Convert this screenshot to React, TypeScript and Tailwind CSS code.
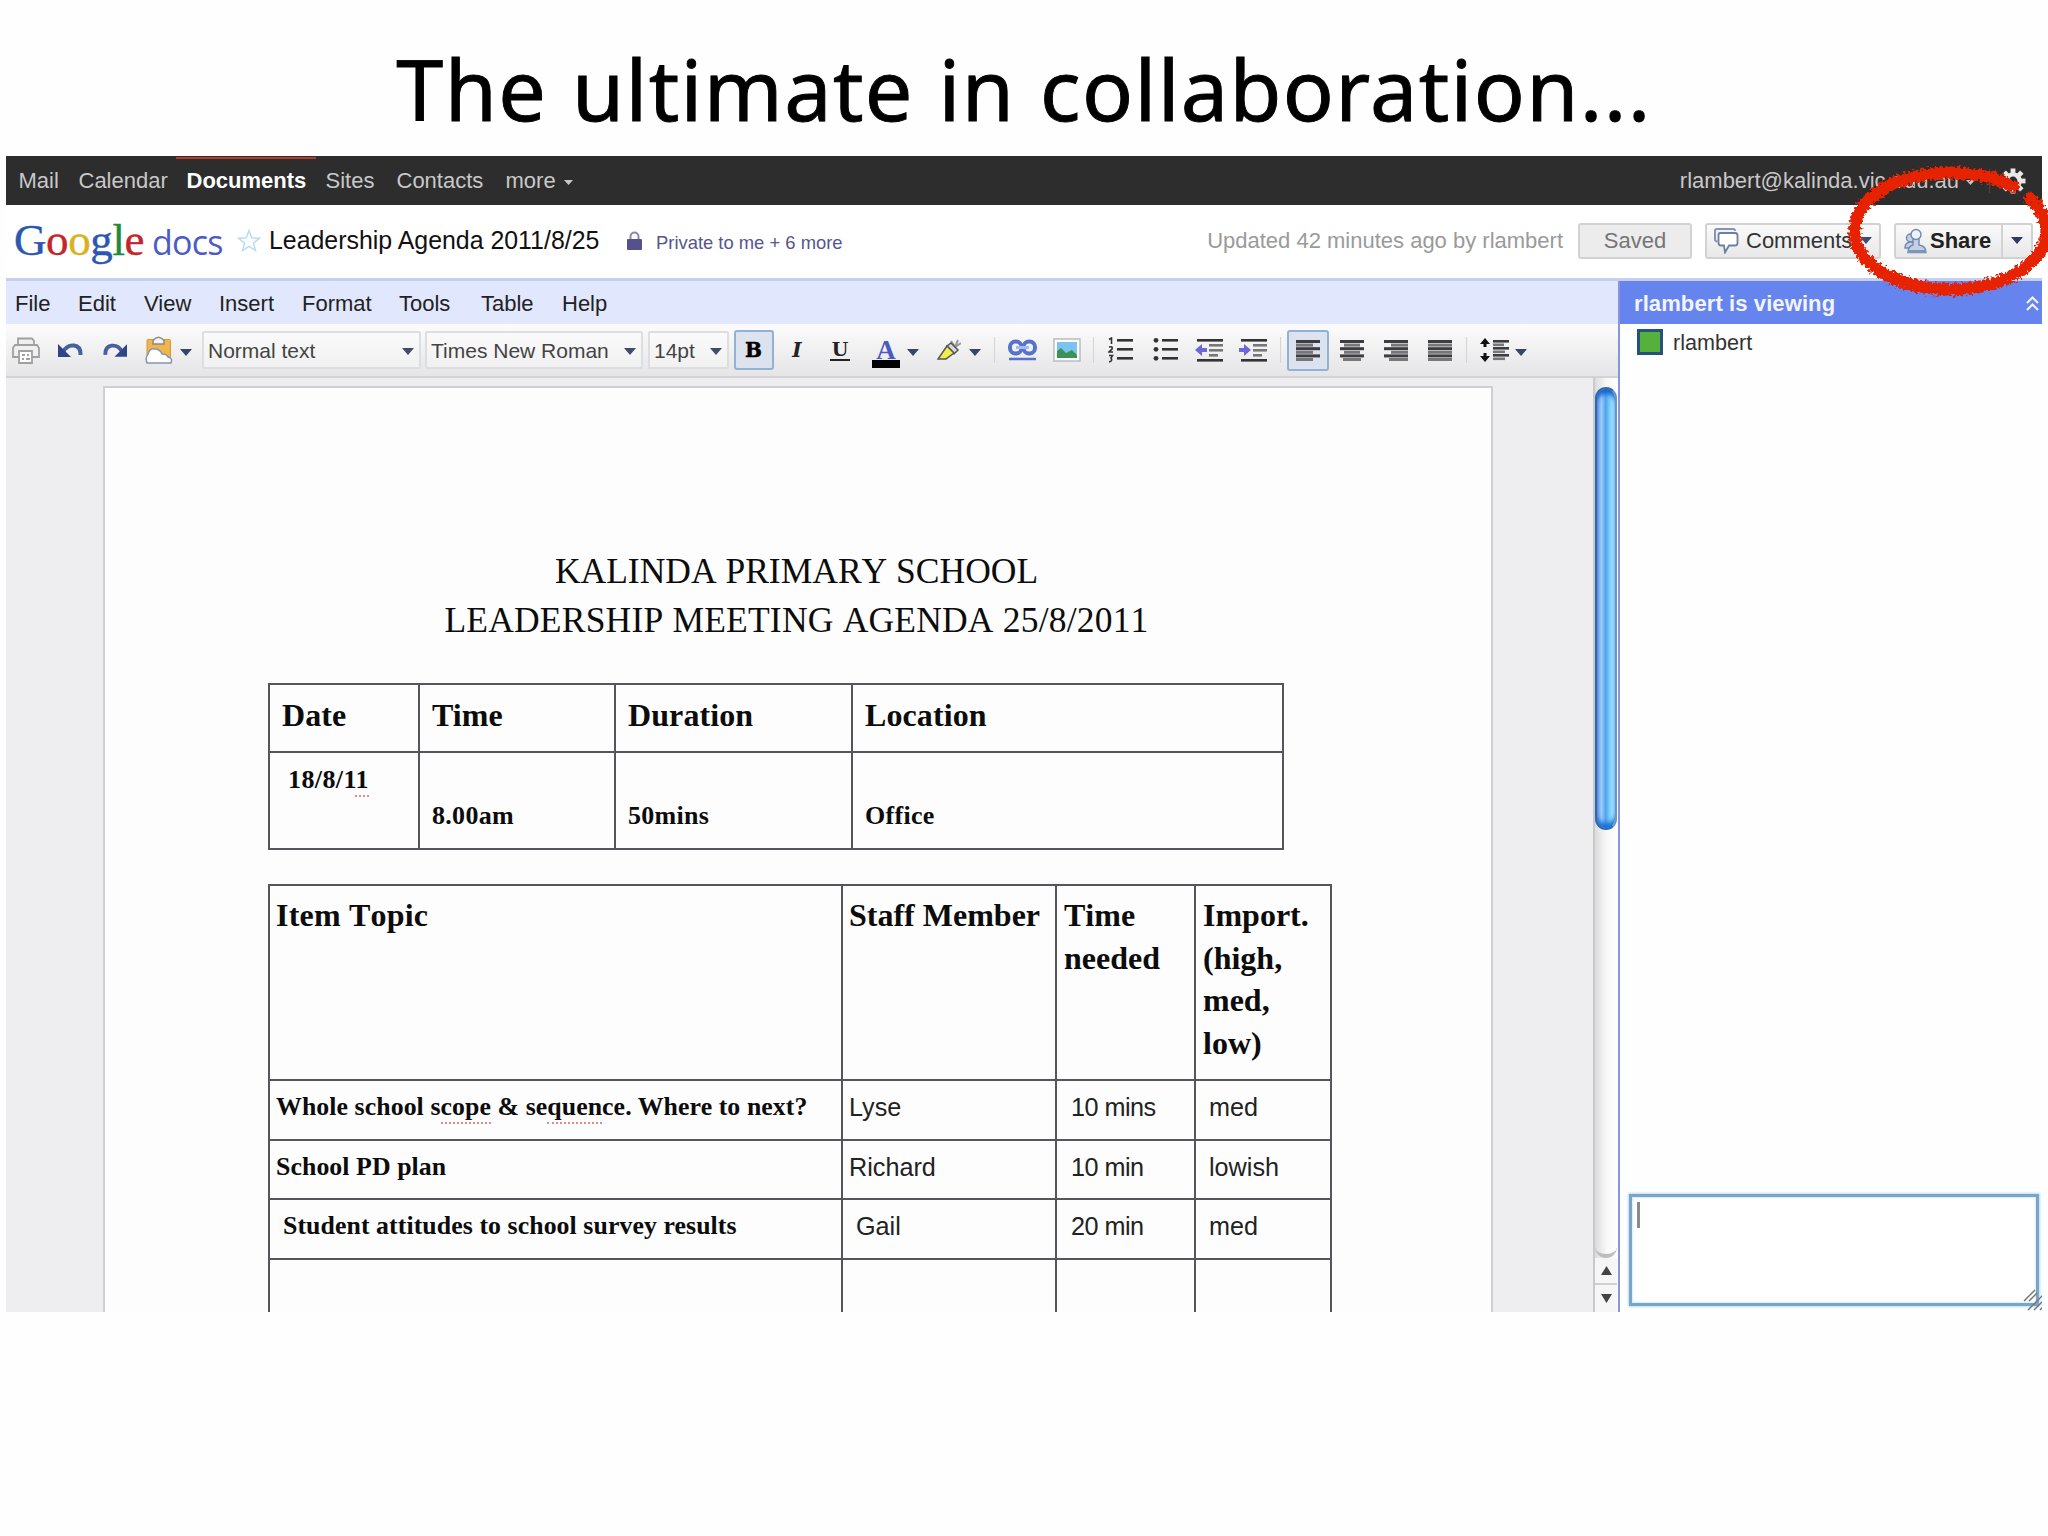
import type { ReactNode } from "react";
import clsx from "clsx";

const navLinks = [
  { label: "Mail", className: "w-[60px]" },
  { label: "Calendar", className: "w-[108px]" },
  { label: "Documents", className: "w-[139px] font-bold text-white" },
  { label: "Sites", className: "w-[71px]" },
  { label: "Contacts", className: "w-[109px]" },
  { label: "more", className: "w-[58px]" },
];

const menus = [
  { label: "File", className: "w-[63px]" },
  { label: "Edit", className: "w-[66px]" },
  { label: "View", className: "w-[75px]" },
  { label: "Insert", className: "w-[83px]" },
  { label: "Format", className: "w-[97px]" },
  { label: "Tools", className: "w-[82px]" },
  { label: "Table", className: "w-[81px]" },
  { label: "Help", className: "w-[60px]" },
];

const Caret = ({ className }: { className?: string }) => (
  <svg
    viewBox="0 0 12 7"
    preserveAspectRatio="none"
    className={clsx("shrink-0", className || "h-[7px] w-3")}
  >
    <path d="M0 0h12L6 7z" fill="currentColor" />
  </svg>
);

const Divider = ({ className }: { className: string }) => (
  <div className={clsx("h-[26px] w-px shrink-0 bg-[#d4d4d8]", className)} />
);

// rows of horizontal strokes: [x, y, width]
const Lines = ({ rows, color = "#333" }: { rows: number[][]; color?: string }) => (
  <>
    {rows.map(([x, y, w]) => (
      <rect key={`${x}-${y}`} x={x} y={y} width={w} height="2.6" fill={color} />
    ))}
  </>
);

const AlignIcon = ({ rows, className }: { rows: number[][]; className?: string }) => (
  <svg viewBox="0 0 24 21" className={clsx("h-[21px] w-6 shrink-0", className)}>
    {rows.map(([x, w], i) => (
      <rect
        key={i}
        x={x}
        y={i * 3.6}
        width={w}
        height="3"
        fill={i % 2 ? "#777" : "#3c3c42"}
      />
    ))}
  </svg>
);

const Squiggle = ({ children }: { children: ReactNode }) => (
  <span className="relative">
    {children}
    <span className="absolute inset-x-0 -bottom-[3px] border-b-2 border-dotted border-[#e08a8a]" />
  </span>
);

const TopBar = () => (
  <div className="flex h-[49px] shrink-0 items-center bg-[#2d2d2d] text-[22px] leading-none text-[#c8c8c8]">
    <div className="relative flex items-center pl-[12.5px]">
      <div className="absolute -top-[13px] left-[170px] h-[2px] w-[140px] bg-[#b5392d]" />
      {navLinks.map(({ label, className }) => (
        <span key={label} className={clsx("shrink-0", className)}>
          {label}
        </span>
      ))}
      <Caret className="mt-1 h-[5px] w-[9px]" />
    </div>
    <span className="ml-auto">rlambert@kalinda.vic.edu.au</span>
    <Caret className="mt-1 ml-[7px] h-[5px] w-[9px]" />
    <div className="ml-[14px] h-[24px] w-px bg-[#444]" />
    <svg viewBox="-13 -13 26 26" className="mr-4 ml-[10px] size-[26px]">
      <g fill="#e8e8e8">
        {[0, 45, 90, 135].map((a) => (
          <rect key={a} x="-2.4" y="-12.5" width="4.8" height="25" transform={`rotate(${a})`} />
        ))}
        <circle r="8.8" />
      </g>
      <circle r="4.4" fill="#2d2d2d" />
    </svg>
  </div>
);

const Logo = () => (
  <div className="flex w-[224px] shrink-0 items-baseline pl-2 leading-none">
    <span className="w-[138px] font-['Liberation_Serif'] text-[45px] tracking-[-0.4px] [-webkit-text-stroke:0.4px]">
      <span className="text-[#2b57b0]">G</span>
      <span className="text-[#c2262c]">o</span>
      <span className="text-[#d9b21c]">o</span>
      <span className="text-[#2b57b0]">g</span>
      <span className="text-[#1d8a3c]">l</span>
      <span className="text-[#c2262c]">e</span>
    </span>
    <span className="font-['Open_Sans'] text-[34px] tracking-[-0.8px] text-[#4b5cc6]">docs</span>
  </div>
);

const Header = () => (
  <div className="flex h-[73px] shrink-0 items-center bg-white pb-[2px] leading-none">
    <Logo />
    <svg viewBox="0 0 24 24" className="ml-[7px] size-6 shrink-0">
      <path
        d="M12 1.5l2.8 7.3 7.7.4-6 4.9 2 7.5-6.5-4.2-6.5 4.2 2-7.5-6-4.9 7.7-.4z"
        fill="#fafdff"
        stroke="#bcdcf0"
        strokeWidth="1.5"
      />
    </svg>
    <span className="ml-[8px] w-[358px] shrink-0 text-[24.9px] text-[#111]">
      Leadership Agenda 2011/8/25
    </span>
    <svg viewBox="0 0 15 19" className="h-[19px] w-[15px] shrink-0">
      <path d="M3.5 9V5.5a4 4 0 018 0V9" fill="none" stroke="#8a88ae" strokeWidth="2" />
      <rect y="8" width="15" height="11" rx="1" fill="#56508c" />
    </svg>
    <span className="mt-[5px] ml-[14px] text-[18.4px] text-[#55558f]">Private to me + 6 more</span>
    <span className="ml-auto text-[22px] text-[#9a9a9a]">Updated 42 minutes ago by rlambert</span>
    <div className="ml-[15px] flex h-9 w-[114px] items-center justify-center rounded-[3px] border-2 border-[#d2d2d2] bg-[#ececec] text-[22px] text-[#757575]">
      Saved
    </div>
    <div className="ml-[13px] flex h-9 w-[176px] items-center rounded-[3px] border-2 border-[#d2d2d2] bg-linear-to-b from-[#fafafa] to-[#e8e8e8] pl-[6px] text-[22px] text-[#333]">
      <svg viewBox="0 0 26 27" className="h-[27px] w-[26px] shrink-0">
        <path d="M4 15L2 13V3.500Q2 2 4 2H20Q22 2 22 4" fill="#eef3fa" stroke="#8496b4" strokeWidth="2" />
        <path
          d="M7 6H22Q24.500 6 24.500 8.500V16Q24.500 18.500 22 18.500H16L12 25.500 11 18.500H8Q5.500 18.500 5.500 16V8.500Q5.500 6 7 6z"
          fill="#fff"
          stroke="#6c7fa3"
          strokeWidth="1.800"
        />
      </svg>
      <span className="ml-[7px] w-[114px]">Comments</span>
      <Caret className="h-[7px] w-3 text-[#3c4a78]" />
    </div>
    <div className="mr-[9px] ml-[13px] flex h-9 w-[139px] items-center rounded-[3px] border-2 border-[#d2d2d2] bg-linear-to-b from-[#fafafa] to-[#e8e8e8] pl-2 text-[22px] font-bold text-[#222]">
      <svg viewBox="0 0 23 26" className="h-[26px] w-[23px] shrink-0">
        <g fill="#c3d1e6" stroke="#7288ae" strokeWidth="1.400">
          <circle cx="6.500" cy="10" r="4" />
          <path d="M1 20Q1 14 7 14T12 20z" />
          <path d="M4 24.500Q4 18 9 17V10H15V17Q22 18 22 24.500z" />
          <circle cx="12" cy="6.500" r="5" fill="#eef3fa" />
        </g>
        <path d="M4 22H22V25H4z" fill="#8093b8" />
      </svg>
      <span className="ml-[3px] w-[72px]">Share</span>
      <div className="flex h-full w-[30px] items-center justify-center border-l-2 border-[#d2d2d2]">
        <Caret className="h-[7px] w-3 text-[#2c3a68]" />
      </div>
    </div>
  </div>
);

const Select = ({ className, children }: { className: string; children: ReactNode }) => (
  <div
    className={clsx(
      "flex h-[38px] shrink-0 items-center justify-between rounded-[2px] border-2 border-[#dcdee2] bg-linear-to-b from-[#fafafa] to-[#f1f1f2] pr-[5px] pl-1 text-[21px] whitespace-nowrap text-[#444]",
      className,
    )}
  >
    <span>{children}</span>
    <Caret className="mt-[3px] h-[7px] w-3 text-[#3f4c6e]" />
  </div>
);

const Toolbar = () => (
  <div className="flex h-[54px] shrink-0 items-center border-b-2 border-[#d3d3d5] bg-linear-to-b from-[#fcfcfc] to-[#e5e5e7] leading-none text-[#36456e]">
    <svg viewBox="0 0 28 27" className="ml-[6px] h-[27px] w-7 shrink-0" fill="#efefef" stroke="#a0a0a0" strokeWidth="1.800">
      <path d="M6 8V1.500H20L22 4V8" />
      <path d="M3 8H25L27 11V20H1V11z" />
      <path d="M7 14H20V26H7z" fill="#fff" />
      <path d="M10 18h3M15 18h2M10 22h2M14 22h4" />
    </svg>
    <svg viewBox="0 0 25 16" className="ml-[18px] h-4 w-[25px] shrink-0">
      <path d="M5 10Q9 2.500 16 3.500T22.500 13" fill="none" stroke="#4a5f9d" strokeWidth="4" />
      <path d="M0 2V15H13z" fill="#2f4587" />
    </svg>
    <svg viewBox="0 0 25 16" className="ml-5 h-4 w-6 shrink-0">
      <path d="M20 10Q16 2.500 9 3.500T2.500 13" fill="none" stroke="#4a5f9d" strokeWidth="4" />
      <path d="M25 2V15H12z" fill="#2f4587" />
    </svg>
    <svg viewBox="0 0 28 28" className="ml-[18px] h-7 w-7 shrink-0">
      <rect x="2" y="3.500" width="23.500" height="22" rx="1" fill="#f0b64a" stroke="#d39a36" />
      <path d="M8 8V4.500Q13.500-2 19 4.500V8z" fill="#f3f3f3" stroke="#8a8a8a" strokeWidth="1.500" />
      <path
        d="M2 27Q0 21 3 18.500Q4 12 10 13Q15 13 17 18Q22 18 23 21Q28 22 26 27z"
        fill="#fff"
        stroke="#8496b4"
        strokeWidth="1.500"
      />
    </svg>
    <Caret className="mt-1 ml-[7px] h-[7px] w-3" />
    <Select className="ml-[10px] w-[219px]">Normal text</Select>
    <Select className="ml-1 w-[218px]">Times New Roman</Select>
    <Select className="ml-[5px] w-[81px]">14pt</Select>
    <div className="ml-[5px] flex h-10 w-10 shrink-0 items-center justify-center rounded-[3px] border-2 border-[#92b1d6] bg-[#dce2ee] pr-px font-['DejaVu_Serif'] text-[20px] font-bold text-black [-webkit-text-stroke:0.5px]">
      B
    </div>
    <span className="ml-[14px] w-[18px] shrink-0 text-center font-['DejaVu_Serif'] text-[20px] font-bold text-[#222] italic">
      I
    </span>
    <span className="mt-[1px] ml-[24px] flex h-[20px] w-[20px] shrink-0 justify-center border-b-2 border-[#222] font-['DejaVu_Serif'] text-[19px] leading-[17px] font-bold text-[#222]">
      U
    </span>
    <span className="mt-[6px] ml-[22px] flex h-[30px] w-7 shrink-0 justify-center border-b-8 border-black font-['Liberation_Serif'] text-[27px] leading-[25px] font-bold text-[#4a59c4]">
      A
    </span>
    <Caret className="mt-1 ml-[7px] h-[7px] w-3" />
    <svg viewBox="0 0 24 22" className="ml-[18px] h-[22px] w-6 shrink-0" stroke="#555" strokeWidth="1.500">
      <path d="M14 2L18 8 21 1M18 8L24 4" stroke="#999" fill="none" strokeWidth="2" />
      <path d="M10 7L14 4 21 11 17 15z" fill="#d8d8d8" />
      <path d="M10 7L17 14 9 20H1z" fill="#f2ee4e" />
    </svg>
    <Caret className="mt-1 ml-2 h-[7px] w-3" />
    <Divider className="ml-[13px]" />
    <svg viewBox="0 0 29 22" className="ml-[13px] h-[22px] w-[29px] shrink-0" fill="none">
      <rect x="2" y="2.500" width="11.500" height="12" rx="5.500" stroke="#5673cc" strokeWidth="4" />
      <rect x="15.500" y="2.500" width="11.500" height="12" rx="5.500" stroke="#5673cc" strokeWidth="4" />
      <path d="M8 8.500H21" stroke="#a9bbf0" strokeWidth="3" />
      <path d="M1 20H28" stroke="#5673cc" strokeWidth="2.500" />
    </svg>
    <svg viewBox="0 0 28 24" className="ml-4 h-6 w-7 shrink-0">
      <rect x="1" y="1" width="26" height="22" fill="#fff" stroke="#b9bcc2" strokeWidth="1.500" />
      <rect x="4" y="4" width="20" height="16" fill="#7cc4f0" />
      <path d="M4 20V13L8 10 13 15 19 12 24 17V20z" fill="#3b9357" />
    </svg>
    <Divider className="ml-3" />
    <svg viewBox="0 0 26 26" className="ml-[14px] size-[26px] shrink-0">
      <Lines rows={[[9, 2, 16], [9, 11, 16], [9, 20, 16]]} />
      <path d="M1 2.500L3.500 1V7M1 10Q5 9 4 12L1 15H5M1 18.500H4.500L3 21Q5 24 1 25" fill="none" stroke="#333" strokeWidth="1.600" />
    </svg>
    <svg viewBox="0 0 26 26" className="ml-[19px] size-[26px] shrink-0">
      <Lines rows={[[9, 2, 16], [9, 11, 16], [9, 20, 16]]} />
      <g fill="#333">
        <circle cx="3" cy="3.300" r="2.400" />
        <circle cx="3" cy="12.300" r="2.400" />
        <circle cx="3" cy="21.300" r="2.400" />
      </g>
    </svg>
    <svg viewBox="0 0 28 24" className="ml-4 h-6 w-7 shrink-0">
      <Lines rows={[[2, 1, 26], [2, 21, 26]]} />
      <Lines rows={[[14, 6, 14], [14, 11, 14], [14, 16, 9]]} color="#777" />
      <path d="M0 12L7 6V10H12V14H7V18z" fill="#6d67d8" />
    </svg>
    <svg viewBox="0 0 28 24" className="ml-4 h-6 w-7 shrink-0">
      <Lines rows={[[2, 1, 26], [2, 21, 26]]} />
      <Lines rows={[[14, 6, 14], [14, 11, 14], [14, 16, 9]]} color="#777" />
      <path d="M12 12L5 6V10H0V14H5V18z" fill="#6d67d8" />
    </svg>
    <Divider className="ml-[13px]" />
    <div className="ml-[6px] flex h-[41px] w-[42px] shrink-0 items-center justify-center rounded-[3px] border-2 border-[#92b1d6] bg-[#dce2ee]">
      <AlignIcon rows={[[0, 24], [0, 17], [0, 24], [0, 17], [0, 24], [0, 17]]} />
    </div>
    <AlignIcon className="ml-[11px]" rows={[[0, 24], [4, 16], [0, 24], [4, 16], [0, 24], [3, 18]]} />
    <AlignIcon className="ml-5" rows={[[0, 24], [7, 17], [0, 24], [7, 17], [0, 24], [5, 19]]} />
    <AlignIcon className="ml-5" rows={[[0, 24], [0, 24], [0, 24], [0, 24], [0, 24], [0, 24]]} />
    <Divider className="ml-[14px]" />
    <svg viewBox="0 0 29 24" className="ml-[13px] h-6 w-[29px] shrink-0">
      <path d="M5 0L10 6H6.500V9H3.500V6H0zM5 24L0 18H3.500V15H6.500V18H10z" fill="#111" />
      <Lines rows={[[13, 2, 16], [13, 9, 16], [13, 16, 16]]} color="#3c3c42" />
      <Lines rows={[[13, 5.5, 11], [13, 12.5, 12], [13, 19.5, 12]]} color="#777" />
    </svg>
    <Caret className="mt-1 ml-[6px] h-[7px] w-3" />
  </div>
);

const cell = "border-2 border-[#55555a] p-0 align-top";
const sansCell = "pt-[11px] font-['Liberation_Sans'] text-[25.2px] text-[#222]";

const MeetingTable = () => (
  <table className="mt-[38px] ml-[163px] w-[1016px] table-fixed border-collapse font-bold">
    <colgroup>
      <col className="w-[150px]" />
      <col className="w-[196px]" />
      <col className="w-[237px]" />
      <col />
    </colgroup>
    <tbody>
      <tr className="h-[68px] text-[32px] leading-[36px]">
        {["Date", "Time", "Duration", "Location"].map((label) => (
          <td key={label} className={clsx(cell, "pt-[12px] pl-[12px] tracking-[0.1px]")}>
            {label}
          </td>
        ))}
      </tr>
      <tr className="h-[97px] text-[26px] leading-[30px]">
        <td className={clsx(cell, "pt-[12px] pl-[18px] tracking-[0.4px]")}>
          18/8/1<Squiggle>1</Squiggle>
        </td>
        {["8.00am", "50mins", "Office"].map((value) => (
          <td key={value} className={clsx(cell, "pt-[48px] pl-[12px] tracking-[0.3px]")}>
            {value}
          </td>
        ))}
      </tr>
    </tbody>
  </table>
);

const agenda = [
  {
    topic: (
      <>
        Whole school s<Squiggle>cope</Squiggle> & se<Squiggle>quen</Squiggle>ce. Where to next?
      </>
    ),
    staff: "Lyse",
    time: "10 mins",
    importance: "med",
  },
  { topic: "School PD plan", staff: "Richard", time: "10 min", importance: "lowish" },
  {
    topic: <span className="pl-[7px]">Student attitudes to school survey results</span>,
    staff: <span className="pl-[7px]">Gail</span>,
    time: "20 min",
    importance: "med",
  },
];

const AgendaTable = () => (
  <table className="mt-[34px] ml-[163px] w-[1064px] table-fixed border-collapse">
    <colgroup>
      <col className="w-[573px]" />
      <col className="w-[214px]" />
      <col className="w-[139px]" />
      <col />
    </colgroup>
    <tbody>
      <tr className="h-[195px] text-[32px] leading-[42.5px] font-bold [font-kerning:none]">
        <td className={clsx(cell, "pt-[8px] pl-[6px] tracking-[0.2px]")}>Item Topic</td>
        <td className={clsx(cell, "pt-[8px] pl-[6px] whitespace-nowrap")}>Staff Member</td>
        <td className={clsx(cell, "pt-[8px] pl-[7px]")}>Time needed</td>
        <td className={clsx(cell, "pt-[8px] pl-[7px]")}>Import. (high, med, low)</td>
      </tr>
      {agenda.map(({ topic, staff, time, importance }, i) => (
        <tr key={i} className="h-[59.5px] text-[25.8px] leading-[30px]">
          <td className={clsx(cell, "pt-[11px] pl-[6px] font-bold tracking-[0.08px]")}>{topic}</td>
          <td className={clsx(cell, sansCell, "pl-[6px]")}>{staff}</td>
          <td className={clsx(cell, sansCell, "pl-[14px] tracking-[-0.5px]")}>{time}</td>
          <td className={clsx(cell, sansCell, "pl-[13px]")}>{importance}</td>
        </tr>
      ))}
      <tr className="h-[120px]">
        <td className={cell} />
        <td className={cell} />
        <td className={cell} />
        <td className={cell} />
      </tr>
    </tbody>
  </table>
);

const Page = () => (
  <div className="mt-2 ml-[97px] h-[940px] w-[1390px] shrink-0 border-2 border-[#cfcfd1] bg-[#fdfdfd] font-['Liberation_Serif'] text-[#0c0c0c]">
    <div className="mt-[159px] ml-[-3px] text-center text-[35.5px] leading-[49px] [font-kerning:none]">
      <p>KALINDA PRIMARY SCHOOL</p>
      <p className="tracking-[0.2px]">LEADERSHIP MEETING AGENDA 25/8/2011</p>
    </div>
    <MeetingTable />
    <AgendaTable />
  </div>
);

const Scrollbar = () => (
  <div className="ml-auto flex w-[25px] flex-col items-center border-l-2 border-[#c9c9cb] bg-linear-to-r from-[#dcdcdc] via-[#f8f8f8] to-white pr-px">
    <div className="mt-[9px] h-[443px] w-[22px] shrink-0 rounded-full border-2 border-[#2e68b4] border-r-[#6f94bd] bg-[linear-gradient(to_right,#6d9fe0,#9ecbfb_25%,#4fa3ec_48%,#7cccfb_70%,#a4e6ff_90%)] shadow-[inset_0_7px_5px_-2px_#1464c8,inset_0_-7px_5px_-2px_#1773d6]" />
    <div className="h-[428px] w-full shrink-0 rounded-b-full border-b-4 border-[#bdbdbd]" />
    <div className="flex h-[27px] w-full shrink-0 items-center justify-center border-b-2 border-[#cfcfcf] bg-[#f6f6f6]">
      <Caret className="h-[9px] w-[11px] rotate-180 text-[#444]" />
    </div>
    <div className="flex h-[27px] w-full shrink-0 items-center justify-center bg-[#f6f6f6]">
      <Caret className="h-[9px] w-[11px] text-[#444]" />
    </div>
  </div>
);

const Sidebar = () => (
  <div className="flex w-[424px] flex-col border-l-2 border-[#8795dc] bg-[#fefefe] leading-none">
    <div className="flex h-[43px] items-center bg-[#6684ee] pt-[2px] pr-[3px] pl-[14px] text-[22px] font-bold tracking-[0.1px] text-[#f2f5ff]">
      rlambert is viewing
      <svg viewBox="0 0 13 15" className="ml-auto h-[15px] w-[13px]" fill="none" stroke="#eef2ff" strokeWidth="2.200">
        <path d="M1 7L6.500 1.500 12 7M1 14L6.500 8.500 12 14" />
      </svg>
    </div>
    <div className="flex items-center pt-[5px] pl-[17px] text-[21.6px] text-[#333]">
      <div className="mr-[10px] size-[26px] border-[3px] border-[#25527c] bg-[#56b13c]" />
      <span className="mt-[2px]">rlambert</span>
    </div>
    <div className="relative mt-auto mr-[3px] mb-[6px] ml-[9px] h-[112px] border-[3px] border-[#7aa5cb] bg-white p-[5px] shadow-[0_0_2px_1px_#b9dcf3,inset_0_0_2px_1px_#d3ecfa]">
      <div className="h-[26px] w-[3px] bg-[#8a8a8a]" />
      <svg viewBox="0 0 20 22" className="absolute -right-[7px] -bottom-[8px] h-[22px] w-5" stroke="#777" strokeWidth="1.500">
        <path d="M1 12L12 1M6 12L14 4M5 21L20 6M11 21L20 12M17 21L20 18" />
      </svg>
    </div>
  </div>
);

// crayon-like ring around the share button
const Ring = () => (
  <svg viewBox="0 0 230 150" className="absolute top-[156px] left-[1832px] h-[150px] w-[230px]">
    <filter id="rough" x="-10%" y="-10%" width="120%" height="120%">
      <feTurbulence type="fractalNoise" baseFrequency="0.350" numOctaves="2" seed="4" />
      <feDisplacementMap in="SourceGraphic" scale="9" xChannelSelector="R" yChannelSelector="G" />
    </filter>
    <g fill="none" stroke="#e62300" filter="url(#rough)">
      <path d="M186 33.500A96 58.500 0 1 0 194 39" strokeWidth="12" />
      <path d="M70 19A99 62 0 0 0 19 72M25 100A99 62 0 0 0 202 108" strokeWidth="3" strokeDasharray="7 3 12 4" />
    </g>
  </svg>
);

export default function App() {
  return (
    <div className="relative h-[1536px] w-[2048px] overflow-hidden bg-[#fefefe] font-['Liberation_Sans',sans-serif] whitespace-nowrap">
      <h1 className="h-[156px] pt-[41px] text-center font-['Noto_Sans'] text-[84.5px] leading-[96px] tracking-[1.35px] text-black [word-spacing:1.5px] [-webkit-text-stroke:0.9px]">
        The ultimate in collaboration...
      </h1>
      <div className="ml-[6px] flex h-[1156px] w-[2036px] flex-col overflow-hidden">
        <TopBar />
        <Header />
        <div className="flex h-[1034px] border-t-3 border-[#c6cfee]">
          <div className="flex w-[1612px] flex-col">
            <div className="flex h-[43px] shrink-0 items-center bg-[#e1e7fd] pt-[2px] pl-[9px] text-[22px] leading-none text-[#222]">
              {menus.map(({ label, className }) => (
                <span key={label} className={className}>
                  {label}
                </span>
              ))}
            </div>
            <Toolbar />
            <div className="flex min-h-0 flex-1 overflow-hidden bg-[#eeedef] whitespace-normal">
              <Page />
              <Scrollbar />
            </div>
          </div>
          <Sidebar />
        </div>
      </div>
      <Ring />
    </div>
  );
}
